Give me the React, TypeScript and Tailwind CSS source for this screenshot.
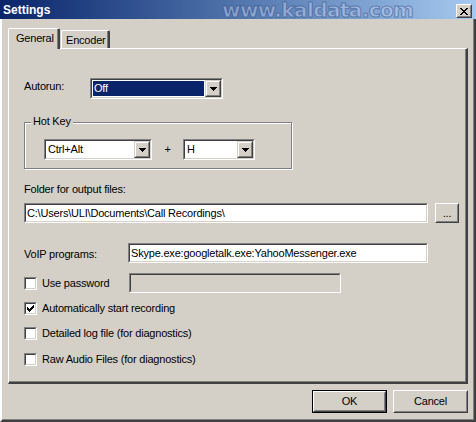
import React from "react";

function Pix({ rows, color = "#000" }: { rows: string[]; color?: string }) {
  const w = rows[0].length;
  const h = rows.length;
  return (
    <svg width={w} height={h} viewBox={`0 0 ${w} ${h}`} shapeRendering="crispEdges" className="block">
      {rows.flatMap((r, y) =>
        r.split("").map((c, x) =>
          c === "#" ? <rect key={`${x}-${y}`} x={x} y={y} width={1} height={1} fill={color} /> : null
        )
      )}
    </svg>
  );
}

const TRI = ["#######", ".#####.", "..###..", "...#..."];
const CHECK = ["......#", ".....##", "#...###", "##.###.", "#####..", ".###...", "..#...."];
const CLOSE = ["##....##", ".##..##.", "..####..", "...##...", "..####..", ".##..##.", "##....##"];

function Sunken({ className, inner, children }: { className: string; inner: string; children?: React.ReactNode }) {
  return (
    <div className={`border border-t-[#808080] border-l-[#808080] border-b-white border-r-white ${className}`}>
      <div className={`h-full w-full border border-t-[#404040] border-l-[#404040] border-b-[#d4d0c8] border-r-[#d4d0c8] ${inner}`}>
        {children}
      </div>
    </div>
  );
}

function ArrowButton() {
  return (
    <div className="w-[16px] h-full border border-t-[#d4d0c8] border-l-[#d4d0c8] border-b-[#404040] border-r-[#404040] bg-[#d4d0c8]">
      <div className="h-full w-full border border-t-white border-l-white border-b-[#808080] border-r-[#808080] flex items-center justify-center pt-px">
        <Pix rows={TRI} />
      </div>
    </div>
  );
}

function Combo({ w, text, selected }: { w: string; text: string; selected?: boolean }) {
  return (
    <Sunken className={`${w} h-[21px]`} inner="flex bg-white">
      <div className="flex-1 flex p-px">
        <div
          className={
            selected
              ? "flex-1 flex items-center bg-[#0a246a] text-white pl-px"
              : "flex-1 flex items-center pl-px"
          }
        >
          {text}
        </div>
      </div>
      <ArrowButton />
    </Sunken>
  );
}

function PushButton({ className, children, isDefault }: { className: string; children: React.ReactNode; isDefault?: boolean }) {
  const btn = (
    <div className="h-full w-full border border-t-white border-l-white border-b-[#404040] border-r-[#404040] bg-[#d4d0c8]">
      <div className="h-full w-full border border-t-[#d4d0c8] border-l-[#d4d0c8] border-b-[#808080] border-r-[#808080] flex items-center justify-center">
        {children}
      </div>
    </div>
  );
  if (isDefault) {
    return <div className={`border border-black ${className}`}>{btn}</div>;
  }
  return <div className={className}>{btn}</div>;
}

function CheckBox({ checked }: { checked?: boolean }) {
  return (
    <Sunken className="w-[13px] h-[13px] flex-none" inner="bg-white flex items-center justify-center">
      {checked ? <Pix rows={CHECK} /> : null}
    </Sunken>
  );
}

export default function App() {
  return (
    <div className="w-[476px] h-[422px] flex flex-col bg-[#d4d0c8] text-black text-[11px] leading-[13px] tracking-[-0.2px] font-['Liberation_Sans',Arial,sans-serif] overflow-hidden">
      {/* Title bar */}
      <div className="h-[19px] flex items-start pl-[3px] bg-gradient-to-r from-[#0a246a] to-[#a6caf0] flex-none">
        <div className="w-[219px] flex-none mt-[4px] text-white font-bold text-[12px] leading-[13px] tracking-normal">Settings</div>
        <div className="flex-none mt-[2px] h-[16px] whitespace-nowrap font-['DejaVu_Sans',Verdana,sans-serif] font-bold text-[20px] leading-[16px] tracking-[-0.6px] text-[rgba(190,205,235,0.55)] [-webkit-text-stroke:1px_rgba(40,70,130,0.5)]">
          www.kaldata.com
        </div>
        <div className="ml-auto mr-[4px] mt-[4px] w-[16px] h-[14px] flex-none border border-t-white border-l-white border-b-[#404040] border-r-[#404040] bg-[#d4d0c8]">
          <div className="h-full w-full border border-t-[#d4d0c8] border-l-[#d4d0c8] border-b-[#808080] border-r-[#808080] flex items-center justify-center">
            <Pix rows={CLOSE} />
          </div>
        </div>
      </div>

      {/* Body */}
      <div className="flex-1 flex flex-col border-l-2 border-l-white border-r-2 border-r-[#404040] border-b-2 border-b-[#404040] shadow-[inset_-1px_-1px_0_#808080] pt-[9px] pl-[6px] pr-[6px] pb-[7px]">
        {/* Tabs */}
        <div className="h-[20px] flex items-end flex-none">
          <div className="relative z-10 -mb-px h-[21px] w-[52px] bg-[#d4d0c8] border-t border-l border-t-white border-l-white border-r-2 border-r-[#404040] rounded-t-[2px] shadow-[inset_-1px_0_0_#808080] pt-[3px] pl-[7px]">
            General
          </div>
          <div className="ml-px h-[18px] w-[49px] border-t border-l border-t-white border-l-white border-r-2 border-r-[#404040] rounded-t-[2px] shadow-[inset_-1px_0_0_#808080] pt-[3px] pl-[4px]">
            Encoder
          </div>
        </div>

        {/* Panel */}
        <div className="h-[336px] flex-none border-t border-l border-t-white border-l-white border-r-2 border-b-2 border-r-[#404040] border-b-[#404040] shadow-[inset_-1px_-1px_0_#808080]">
          <div className="flex flex-col pl-[15px]">
            <div className="mt-[29px] flex items-start h-[21px]">
              <span className="w-[66px] pt-[2px]">Autorun:</span>
              <Combo w="w-[133px]" text="Off" selected />
            </div>

            <div className="mt-[23px] relative w-[268px] h-[47px] border border-[#808080] shadow-[1px_1px_0_#fff,inset_1px_1px_0_#fff]">
              <span className="absolute -top-[8px] left-[6px] px-[2px] bg-[#d4d0c8] leading-[13px]">Hot Key</span>
              <div className="flex items-center pl-[19px] pt-[16px]">
                <Combo w="w-[108px]" text="Ctrl+Alt" />
                <span className="w-[31px] text-center">+</span>
                <Combo w="w-[72px]" text="H" />
              </div>
            </div>

            <div className="mt-[14px]">Folder for output files:</div>
            <div className="mt-[7px] flex">
              <Sunken className="w-[404px] h-[20px]" inner="bg-white flex items-center pl-px">
                {"C:\\Users\\ULI\\Documents\\Call Recordings\\"}
              </Sunken>
              <PushButton className="ml-[7px] w-[24px] h-[20px]">...</PushButton>
            </div>

            <div className="mt-[20px] flex h-[20px]">
              <span className="w-[104px] pt-[5px]">VoIP programs:</span>
              <Sunken className="w-[300px] h-[20px]" inner="bg-white flex items-center pl-px">
                Skype.exe:googletalk.exe:YahooMessenger.exe
              </Sunken>
            </div>

            <div className="mt-[10px] flex items-center h-[20px]">
              <div className="w-[105px] flex items-center gap-[5px]">
                <CheckBox />
                <span>Use password</span>
              </div>
              <Sunken className="w-[212px] h-[20px]" inner="bg-[#d4d0c8]" />
            </div>

            <div className="mt-[9px] flex items-center gap-[5px] h-[13px]">
              <CheckBox checked />
              <span>Automatically start recording</span>
            </div>
            <div className="mt-[12px] flex items-center gap-[5px] h-[13px]">
              <CheckBox />
              <span>Detailed log file (for diagnostics)</span>
            </div>
            <div className="mt-[13px] flex items-center gap-[5px] h-[13px]">
              <CheckBox />
              <span>Raw Audio Files (for diagnostics)</span>
            </div>
          </div>
        </div>

        {/* Buttons */}
        <div className="mt-[6px] flex justify-end gap-[6px] flex-none">
          <PushButton className="w-[75px] h-[23px]" isDefault>
            OK
          </PushButton>
          <PushButton className="w-[75px] h-[23px]">Cancel</PushButton>
        </div>
      </div>
    </div>
  );
}
